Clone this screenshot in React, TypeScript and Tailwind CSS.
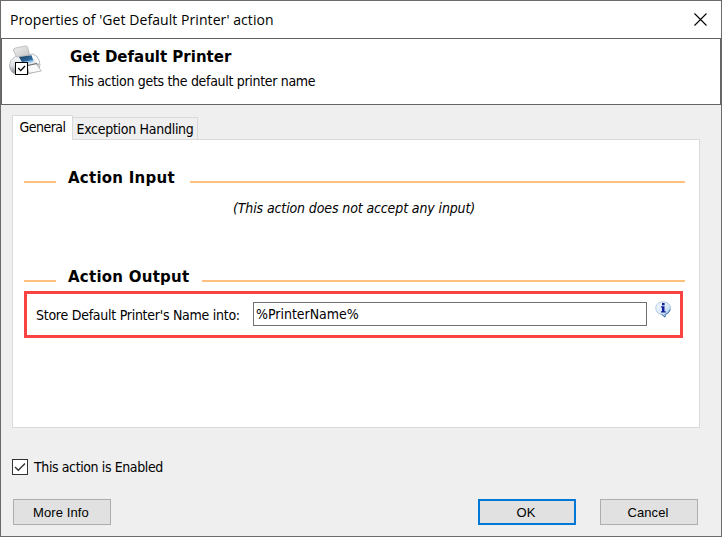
import type { ReactNode } from "react";

const tahoma = "font-['DejaVu_Sans_Condensed','DejaVu_Sans',sans-serif] [font-stretch:condensed]";

function PrinterIcon() {
  return (
    <svg width="34" height="32" viewBox="0 0 34 32">
      <defs>
        <linearGradient id="paper" x1="0" y1="0" x2="1" y2="1">
          <stop offset="0" stopColor="#f0f0f0" />
          <stop offset="1" stopColor="#c6c6c6" />
        </linearGradient>
        <linearGradient id="body" x1="0" y1="0" x2="0" y2="1">
          <stop offset="0" stopColor="#fafbfc" />
          <stop offset=".55" stopColor="#dfe3e7" />
          <stop offset="1" stopColor="#7d8186" />
        </linearGradient>
        <linearGradient id="slot" x1="0" y1="0" x2="1" y2="1">
          <stop offset="0" stopColor="#173b5c" />
          <stop offset="1" stopColor="#3f83c0" />
        </linearGradient>
      </defs>
      <path d="M4 13.5Q6 11 10 10.5L24 9Q28 10 30 15L31 20L29 26L16 29.5L5 28.5Q.5 26 .5 20Q1 15 4 13.5Z" fill="url(#body)" stroke="#a9acb0" strokeWidth=".8" />
      <path d="M4.3 5Q4.5 3.5 6.5 3L16 1Q18.3 .6 18.8 2.5L20.5 10L7.5 12Z" fill="url(#paper)" stroke="#b4b4b4" strokeWidth=".8" />
      <path d="M10 12L22.5 10.3L24.5 16L13.5 18Z" fill="url(#slot)" />
      <path d="M13 17L24 15L24 17L14 19Z" fill="#8cc4ee" />
      <path d="M24 11.5Q28 13 29 18" fill="none" stroke="#fff" strokeWidth="2" />
      <path d="M18 20.5L27 18.5L32.3 26L20 28.3Z" fill="#fafafa" stroke="#a0a0a0" strokeWidth=".7" />
      <path d="M19 20.5L28 18.5L29.5 20" fill="none" stroke="#666" strokeWidth=".9" />
      <rect x="6.5" y="17.5" width="12" height="12" fill="#fff" stroke="#000" />
      <path d="M9.3 23L11.7 25.6L16 21" fill="none" stroke="#000" strokeWidth="1.3" />
    </svg>
  );
}

function InfoIcon() {
  return (
    <svg width="17" height="17" viewBox="0 0 17 17">
      <defs>
        <linearGradient id="bubble" x1="0" y1="0" x2="1" y2="1">
          <stop offset="0" stopColor="#f6fbff" />
          <stop offset=".6" stopColor="#d3e6f8" />
          <stop offset="1" stopColor="#7fabdc" />
        </linearGradient>
      </defs>
      <path d="M8 .8C12.4 .8 15.5 3.5 15.5 7.2C15.5 10.5 13.3 12.8 10.3 13.4L10 16.2L6.5 13.5C3.2 13.2 .8 10.6 .8 7.2C.8 3.5 3.7 .8 8 .8Z" fill="url(#bubble)" stroke="#a3bddb" strokeWidth=".8" />
      <path d="M15.2 8.5Q14 12.4 10.3 13.4L10 16L6.5 13.3" fill="none" stroke="#4776af" strokeWidth="1" />
      <rect x="7" y="2" width="2.6" height="2.3" fill="#10209a" />
      <path d="M6 5.3H9.5V10.3H10.7V11.6H6V10.3H7V6.6H6Z" fill="#10209a" />
    </svg>
  );
}

function SectionTitle({ children, width }: { children: ReactNode; width: string }) {
  return (
    <div className="flex h-5 items-center">
      <div className="h-[2px] w-8 translate-y-px bg-[#ffc080]" />
      <h2 className={`${width} mb-[7px] pl-3 font-['DejaVu_Sans',sans-serif] text-[15px] leading-5 font-bold tracking-[.25px] whitespace-nowrap [font-stretch:normal]`}>{children}</h2>
      <div className="h-[2px] flex-1 translate-y-px bg-[#ffc080]" />
    </div>
  );
}

function Button({ children, primary = false }: { children: ReactNode; primary?: boolean }) {
  return (
    <button className={`h-[26px] w-[98px] bg-[#e1e1e1] pt-px pr-[2px] font-['Liberation_Sans',sans-serif] text-[13px] tracking-[.1px] ${primary ? "border-2 border-[#0078d7]" : "border border-[#adadad]"}`}>
      {children}
    </button>
  );
}

export default function App() {
  return (
    <div className={`flex h-[537px] w-[722px] flex-col overflow-hidden border border-[#6b6b6b] bg-[#efefef] text-black ${tahoma}`}>
      <header className="flex h-[37px] shrink-0 items-center justify-between bg-white pr-[14px] pl-[9px]">
        <h1 className="font-['Open_Sans',sans-serif] text-[14px] tracking-[.07px] whitespace-nowrap [font-stretch:normal]">Properties of 'Get Default Printer' action</h1>
        <svg width="13" height="13" viewBox="0 0 13 13"><path d="M.5 .5L12.5 12.5M12.5 .5L.5 12.5" stroke="#000" strokeWidth="1.1" /></svg>
      </header>
      <section className="flex h-[67px] shrink-0 border border-[#636363] bg-white pt-[6px] pl-[7px]">
        <PrinterIcon />
        <div className="pl-[26px]">
          <div className="pl-px font-['DejaVu_Sans',sans-serif] text-[15px] leading-[24px] font-bold [font-stretch:normal]">Get Default Printer</div>
          <div className="text-[14px] leading-[25px] tracking-[-.31px]">This action gets the default printer name</div>
        </div>
      </section>
      <div className="mt-[9px] ml-[11px] flex h-[25px] shrink-0 items-end text-[14px]">
        <div className="z-10 -mb-px flex h-[25px] w-[61px] justify-center border border-b-0 border-[#d9d9d9] bg-white pt-px leading-5 tracking-[-.5px]">General</div>
        <div className="flex h-[22px] w-[125px] justify-center border border-b-0 border-l-0 border-[#d9d9d9] leading-[22px] tracking-[-.28px] whitespace-nowrap">Exception Handling</div>
      </div>
      <main className="ml-[11px] h-[289px] w-[688px] shrink-0 border border-[#d9d9d9] bg-white pl-[11px]">
        <div className="w-[661px] pt-[31px]">
          <SectionTitle width="w-[134px]">Action Input</SectionTitle>
          <p className="mt-[7px] pl-[209px] text-[14px] leading-5 tracking-[-.12px] italic">(This action does not accept any input)</p>
          <div className="mt-[52px]"><SectionTitle width="w-[146px]">Action Output</SectionTitle></div>
        </div>
        <div className="mt-px flex h-[47px] w-[659px] border-[3px] border-[#fa4343]">
          <label className="w-[226px] pt-[10px] pl-[9px] text-[14px] leading-[22px] tracking-[-.26px] whitespace-nowrap">Store Default Printer's Name into:</label>
          <div className="mt-2 h-6 w-[394px] border border-[#707070] pl-[2px] text-[14px] leading-[22px] tracking-[-.02px]">%PrinterName%</div>
          <div className="mt-[7px] ml-2"><InfoIcon /></div>
        </div>
      </main>
      <div className="mt-[30px] ml-[11px] flex h-[18px] items-center gap-[6px] text-[14px] tracking-[-.39px]">
        <svg width="16" height="16" viewBox="0 0 16 16"><rect x=".5" y=".5" width="15" height="15" fill="#fff" stroke="#333" /><path d="M3 8L6.3 11.2L13 4.5" fill="none" stroke="#333" strokeWidth="1.4" /></svg>
        <span>This action is Enabled</span>
      </div>
      <footer className="mt-[23px] flex pl-3">
        <Button>More Info</Button>
        <div className="ml-[367px] flex gap-6"><Button primary>OK</Button><Button>Cancel</Button></div>
      </footer>
    </div>
  );
}
